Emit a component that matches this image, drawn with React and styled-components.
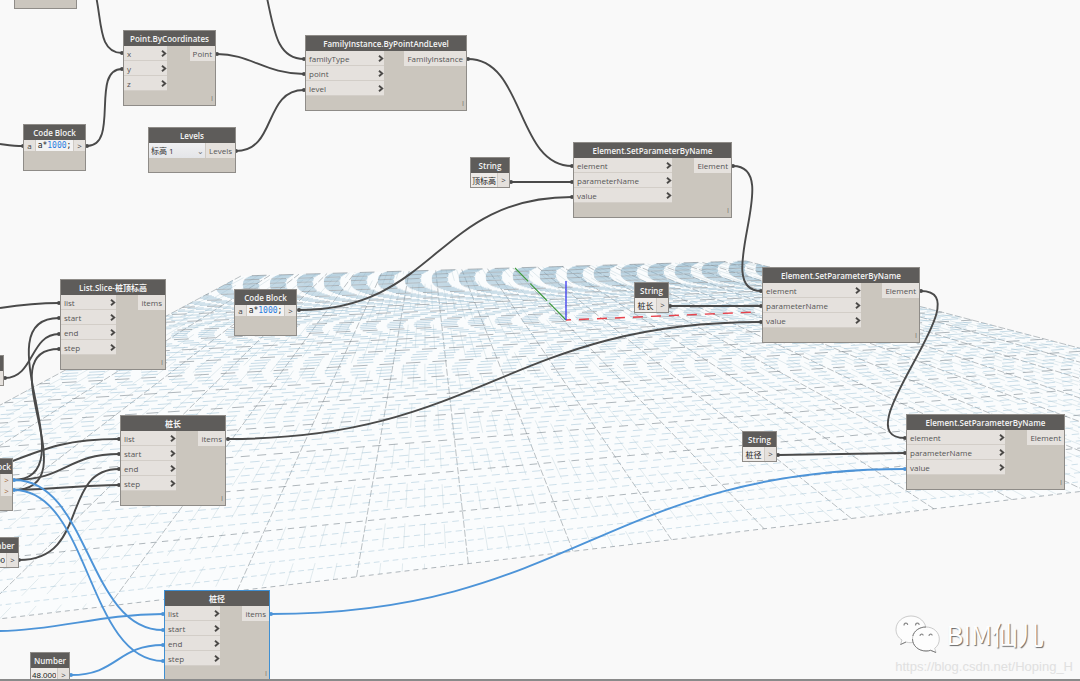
import React from 'react';
import styled, { createGlobalStyle } from 'styled-components';

const GlobalStyle = createGlobalStyle`
    * { box-sizing: border-box; }
    body {
        margin: 0;
        background: #f9f9f9;
        font-family: "Open Sans", "Noto Sans", "Noto Sans CJK SC", sans-serif;
    }
`;

const Workspace = styled.main`
    position: relative;
    min-height: 100vh;
    overflow: hidden;
    border-bottom: 2px solid #8a8a8a;
`;
const Layer = styled.svg`
    position: absolute;
    inset: 0;
    width: 100%;
    height: 100%;
`;

// nodes
const NodeBox = styled.section`
    position: absolute;
    left: ${(p) => p.$x}px;
    top: ${(p) => p.$y}px;
    width: ${(p) => p.$w}px;
    background: #cbc6be;
    border: 1px solid ${(p) => (p.$selected ? '#3f8fd2' : '#8f8c88')};
    color: #555;
    font-size: 8px;
    line-height: 15px;
`;
const NodeTitle = styled.h2`
    margin: 0;
    height: 15px;
    background: #5e5c5a;
    color: #f4f4f4;
    font-size: 8px;
    line-height: 15px;
    font-weight: 600;
    text-align: center;
    white-space: nowrap;
`;
const Ports = styled.div`
    display: flex;
    align-items: flex-start;
    justify-content: space-between;
`;
const InputList = styled.ul`
    width: ${(p) => p.$w}px;
    margin: 0;
    padding: 0;
    list-style: none;
`;
const InputPort = styled.li`
    display: flex;
    align-items: center;
    justify-content: space-between;
    height: 15px;
    padding: 0 0 0 3px;
    background: #e5e1dd;
    border-bottom: 1px solid #d3cec8;
`;
const OutputPort = styled.span`
    height: 15px;
    padding: 0 3px;
    background: #e5e1dd;
`;
const Lacing = styled.div`
    height: ${(p) => p.$h}px;
    padding-right: 2px;
    color: #77736e;
    font-size: 7px;
    line-height: 16px;
    text-align: right;
`;
const ValueRow = styled.div`
    display: flex;
    height: ${(p) => p.$h}px;
    background: #e5e1dd;
    line-height: ${(p) => p.$h}px;
`;
const ValueInput = styled.input`
    flex: 1;
    min-width: 0;
    padding: 0 1px;
    border: 0;
    border-right: 1px solid #cfcac4;
    background: #eeebe8;
    color: #222;
    font-family: "Liberation Sans", "Noto Sans CJK SC", sans-serif;
    font-size: 8px;
    text-align: ${(p) => p.$align || 'center'};
`;
const OutArrow = styled.span`
    width: 11px;
    color: ${(p) => (p.$warm ? '#a3663c' : '#444')};
    text-align: center;
`;
const CodeText = styled.code`
    flex: 1;
    border: solid #cfcac4;
    border-width: 0 1px;
    background: #f3f2f2;
    color: #222;
    font-family: "DejaVu Sans Mono", "Liberation Mono", monospace;
    font-size: 8px;
    line-height: 12px;
    text-align: center;

    b { color: #2b7ee0; font-weight: normal; }
`;
const LevelSelect = styled.select`
    flex: 1;
    min-width: 0;
    padding: 0 2px;
    appearance: none;
    border: 0;
    border-right: 1px solid #cfcac4;
    background: linear-gradient(#f0f0f2, #e4e5e8);
    color: #333;
    font: inherit;
`;
const SelectCaret = styled.span`
    position: absolute;
    right: 31px;
    color: #777;
    pointer-events: none;
`;
const Filler = styled.div`
    height: ${(p) => p.$h}px;
`;

// watermark
const Watermark = styled.footer`
    position: absolute;
    right: 7px;
    bottom: 3px;
    display: flex;
    flex-direction: column;
    align-items: flex-end;
    opacity: 0.99;
`;
const Brand = styled.div`
    display: flex;
    align-items: center;
    gap: 6px;
    margin-right: 29px;
    color: #fff;
    font-family: "Noto Sans CJK SC", sans-serif;
    font-size: 26px;
    line-height: 38px;
    text-shadow: 1px 1px 1px #666;
`;
const BlogLink = styled.a`
    margin-top: 5px;
    color: #e0e0e0;
    font-family: "Liberation Sans", Arial, sans-serif;
    font-size: 13px;
    line-height: 18px;
    text-decoration: none;
`;

// ---- ground grid: 20 x 20 major cells, 5 minor cells in each ----
const CELLS = 100;
const corners = { bl: [-511, 679], br: [1458, 447], tr: [746, 261], tl: [241, 276] };

const makeProjection = ({ bl, br, tr, tl }) => {
    const sx = bl[0] - br[0] + tr[0] - tl[0];
    const sy = bl[1] - br[1] + tr[1] - tl[1];
    const dx1 = br[0] - tr[0];
    const dy1 = br[1] - tr[1];
    const dx2 = tl[0] - tr[0];
    const dy2 = tl[1] - tr[1];
    const det = dx1 * dy2 - dy1 * dx2;
    const g = (sx * dy2 - sy * dx2) / det;
    const h = (dx1 * sy - dy1 * sx) / det;
    return (i, j) => {
        const u = i / CELLS;
        const v = j / CELLS;
        const w = g * u + h * v + 1;
        return [0, 1].map((n) =>
            ((br[n] - bl[n] + g * br[n]) * u + (tl[n] - bl[n] + h * tl[n]) * v + bl[n]) / w);
    };
};
const project = makeProjection(corners);
const indexes = [...Array(CELLS + 1).keys()];
const lineBetween = (a, b) => `M${a[0].toFixed(2)} ${a[1].toFixed(2)}L${b[0].toFixed(2)} ${b[1].toFixed(2)}`;

const Ground = () => (
    <Layer aria-hidden="true" fill="none">
        <polygon
            points={[corners.bl, corners.br, corners.tr, corners.tl].join(' ')}
            fill="#fafcfd"
        />
        {indexes.map((i) => {
            const major = i % 5 === 0;
            return (
                <path
                    key={'c' + i}
                    d={lineBetween(project(i, 0), project(i, CELLS))}
                    stroke={major ? '#7d878d' : '#a3bcc8'}
                    strokeOpacity={major ? 0.65 : 0.42}
                    strokeWidth={major ? 0.8 : 0.7}
                    strokeDasharray={major ? '7 2' : '24 16'}
                    strokeDashoffset={major ? 0 : i * 3}
                />
            );
        })}
        {indexes.map((j) => {
            const major = j % 5 === 0;
            const from = project(0, j);
            const period = 9 + 18 * Math.min(1, j / 36);
            const bend = Math.abs(89 - j);
            const shift = (period * bend * bend * bend) / (3 * 37 * 37);
            const far = Math.min(1, j / 70);
            return (
                <path
                    key={'r' + j}
                    d={lineBetween(from, project(CELLS, j))}
                    stroke={major ? '#75828a' : '#8ab4cc'}
                    strokeOpacity={major ? 0.72 : 0.48 + 0.16 * far}
                    strokeWidth={0.8}
                    strokeDasharray={major
                        ? `${period * 0.55} ${period * 0.45}`
                        : `${period * 0.6} ${period * 0.4}`}
                    strokeDashoffset={from[0] - shift}
                />
            );
        })}
        <path d="M566 320L515 268" stroke="#3f9a3f" strokeDasharray="24 3" strokeWidth="1.2" />
        <path d="M566 320L756 312" stroke="#e8434d" strokeDasharray="10 8" strokeDashoffset="5" strokeWidth="1.4" />
        <path d="M566 320V281" stroke="#4545ee" strokeWidth="1.4" />
    </Layer>
);

const wires = [
    { d: 'M96 -4C102 24 99 53 122 53', to: [122, 53] },
    { d: 'M87 146C120 146 90 69 122 69', from: [87, 146], to: [122, 69] },
    { d: 'M0 144C8 145 14 146 23 146', to: [23, 146] },
    { d: 'M267 -2C274 30 277 59 304 59', to: [304, 59] },
    { d: 'M217 54C250 54 266 74 304 74', from: [217, 54], to: [304, 74] },
    { d: 'M236 151C277 151 263 90 304 90', from: [236, 151], to: [304, 90] },
    { d: 'M468 59C525 59 516 166 572 166', from: [468, 59], to: [572, 166] },
    { d: 'M511 182L572 182', from: [511, 182], to: [572, 182] },
    { d: 'M299 310C436 310 436 197 572 197', from: [299, 310], to: [572, 197] },
    { d: 'M733 166C785 166 710 291 761 291', from: [733, 166], to: [761, 291] },
    { d: 'M670 306H761', from: [670, 306], to: [761, 306] },
    { d: 'M228 439C480 439 510 322 761 322', from: [228, 439], to: [761, 322] },
    { d: 'M921 291C985 291 840 438 905 438', from: [921, 291], to: [905, 438] },
    { d: 'M778 455L905 453', from: [778, 455], to: [905, 453] },
    { d: 'M0 308C20 305 34 303 59 303', to: [59, 303] },
    { d: 'M13 480C90 480 -20 318 59 318', to: [59, 318] },
    { d: 'M5 378C34 378 30 334 59 334', from: [5, 378], to: [59, 334] },
    { d: 'M13 490C92 490 -14 349 59 349', to: [59, 349] },
    { d: 'M0 466C50 446 70 439 119 439', to: [119, 439] },
    { d: 'M13 480C66 480 67 454 119 454', to: [119, 454] },
    { d: 'M19 560C90 560 60 469 119 469', from: [19, 560], to: [119, 469] },
    { d: 'M13 490C50 490 80 485 119 485', to: [119, 485] },
    { d: 'M271 614C570 614 607 469 905 469', from: [271, 614], to: [905, 469], active: true },
    { d: 'M14 480C90 480 87 630 163 630', from: [14, 480], to: [163, 630], active: true },
    { d: 'M14 490C90 490 87 661 163 661', from: [14, 490], to: [163, 661], active: true },
    { d: 'M0 631C60 630 100 614 163 614', to: [163, 614], active: true },
    { d: 'M71 675C118 675 117 645 163 645', from: [71, 675], to: [163, 645], active: true },
];

const Wires = () => (
    <Layer aria-hidden="true" fill="none">
        {wires.map(({ d, from, to, active }) => {
            const color = active ? '#4d94d8' : '#4a4a4a';
            return (
                <g key={d}>
                    <path d={d} stroke={color} strokeWidth="1.9" />
                    {from && <circle cx={from[0]} cy={from[1]} r="2" fill={color} />}
                    <circle cx={to[0]} cy={to[1]} r="2" fill={color} />
                </g>
            );
        })}
    </Layer>
);

const Chevron = () => (
    <svg width="6" height="7" viewBox="0 0 6 7" aria-hidden="true">
        <path d="M1 0.8L4.2 3.5L1 6.2" fill="none" stroke="#4c4a48" strokeWidth="1.9" />
    </svg>
);

const FunctionNode = ({ title, x, y, w, inW, inputs, output, selected }) => (
    <NodeBox $x={x} $y={y} $w={w} $selected={selected}>
        <NodeTitle>{title}</NodeTitle>
        <Ports>
            <InputList $w={inW}>
                {inputs.map((name) => (
                    <InputPort key={name}>{name}<Chevron /></InputPort>
                ))}
            </InputList>
            <OutputPort>{output}</OutputPort>
        </Ports>
        <Lacing $h={14}>I</Lacing>
    </NodeBox>
);

const ValueNode = ({ title, x, y, w, value, align }) => (
    <NodeBox $x={x} $y={y} $w={w}>
        <NodeTitle>{title}</NodeTitle>
        <ValueRow $h={14}>
            <ValueInput aria-label={title} defaultValue={value} $align={align} />
            <OutArrow>&gt;</OutArrow>
        </ValueRow>
    </NodeBox>
);

const CodeNode = ({ x, y }) => (
    <NodeBox $x={x} $y={y} $w={63}>
        <NodeTitle>Code Block</NodeTitle>
        <ValueRow $h={11}>
            <OutArrow>a</OutArrow>
            <CodeText>a*<b>1000</b>;</CodeText>
            <OutArrow>&gt;</OutArrow>
        </ValueRow>
        <Filler $h={19} />
    </NodeBox>
);

const setInputs = ['element', 'parameterName', 'value'];
const listInputs = ['list', 'start', 'end', 'step'];

const functionNodes = [
    { title: 'Point.ByCoordinates', x: 123, y: 30, w: 93, inW: 43, inputs: ['x', 'y', 'z'], output: 'Point' },
    { title: 'FamilyInstance.ByPointAndLevel', x: 305, y: 35, w: 162, inW: 78, inputs: ['familyType', 'point', 'level'], output: 'FamilyInstance' },
    { title: 'Element.SetParameterByName', x: 573, y: 142, w: 159, inW: 98, inputs: setInputs, output: 'Element' },
    { title: 'Element.SetParameterByName', x: 762, y: 267, w: 158, inW: 98, inputs: setInputs, output: 'Element' },
    { title: 'Element.SetParameterByName', x: 906, y: 414, w: 159, inW: 98, inputs: setInputs, output: 'Element' },
    { title: 'List.Slice-桩顶标高', x: 60, y: 279, w: 106, inW: 55, inputs: listInputs, output: 'items' },
    { title: '桩长', x: 120, y: 415, w: 106, inW: 55, inputs: listInputs, output: 'items' },
    { title: '桩径', x: 164, y: 590, w: 106, inW: 55, inputs: listInputs, output: 'items', selected: true },
];
const valueNodes = [
    { title: 'String', x: 470, y: 157, w: 40, value: '顶标高' },
    { title: 'String', x: 634, y: 282, w: 35, value: '桩长' },
    { title: 'String', x: 742, y: 431, w: 35, value: '桩径' },
    { title: 'Number', x: 30, y: 652, w: 40, value: '48.000' },
    { title: 'Number', x: -22, y: 537, w: 41, value: '0.000', align: 'right' },
];

const WeChatIcon = () => (
    <svg width="45" height="38" viewBox="0 0 45 38" aria-hidden="true">
        <g fill="#fefefe" stroke="#b5b5b5" strokeWidth="0.7">
            <path d="M16 1C7.700 1 1 7 1 14.500C1 19 3.400 22.800 7 25L5.500 29.500L11 27C12.600 27.500 14.300 27.700 16 27.700C24.300 27.700 31 22 31 14.500C31 7 24.300 1 16 1Z" />
            <path d="M31 12C23.500 12 17.500 17.300 17.500 24C17.500 30.700 23.500 36 31 36C32.700 36 34.200 35.800 35.600 35.300L41 37.500L39.700 33.300C42.700 31.200 44.300 27.800 44.300 24C44.300 17.300 38.500 12 31 12Z" />
        </g>
        <path d="M17.500 24C17.500 30.700 23.500 36 31 36C32.700 36 34.200 35.800 35.600 35.300L41 37.500M17.800 21C19 16 24 12 31 12M5.500 29.500L11 27" fill="none" stroke="#7d7d7d" strokeWidth="1" />
        <g fill="none" stroke="#8b8b8b" strokeWidth="1.200">
            <path d="M9 10.500C9 7.500 12.500 7.500 12.700 10" />
            <path d="M20.500 10.500C20.500 7.500 24 7.500 24.200 10" />
            <path d="M25 21C25 18.500 28 18.500 28.200 20.500" />
            <path d="M34 21C34 18.500 37 18.500 37.200 20.500" />
        </g>
    </svg>
);

const App = () => (
    <>
        <GlobalStyle />
        <Workspace>
            <Ground />
            <Wires />

            <NodeBox $x={14} $y={-22} $w={63}>
                <Filler $h={29} />
            </NodeBox>
            <NodeBox $x={-36} $y={355} $w={40}>
                <NodeTitle />
                <ValueRow $h={14} />
            </NodeBox>
            <NodeBox $x={-34} $y={458} $w={47}>
                <NodeTitle>Code Block</NodeTitle>
                <ValueRow $h={11}>
                    <CodeText />
                    <OutArrow $warm>&gt;</OutArrow>
                </ValueRow>
                <ValueRow $h={11}>
                    <CodeText />
                    <OutArrow $warm>&gt;</OutArrow>
                </ValueRow>
                <Filler $h={14} />
            </NodeBox>

            {functionNodes.map((node) => (
                <FunctionNode key={node.x} {...node} />
            ))}
            {valueNodes.map((node) => (
                <ValueNode key={node.x} {...node} />
            ))}
            <CodeNode x={23} y={124} />
            <CodeNode x={234} y={289} />

            <NodeBox $x={148} $y={127} $w={88}>
                <NodeTitle>Levels</NodeTitle>
                <ValueRow $h={15}>
                    <LevelSelect aria-label="Levels">
                        <option>标高 1</option>
                    </LevelSelect>
                    <SelectCaret>⌄</SelectCaret>
                    <OutputPort>Levels</OutputPort>
                </ValueRow>
                <Filler $h={14} />
            </NodeBox>

            <Watermark>
                <Brand><WeChatIcon />BIM仙儿</Brand>
                <BlogLink href="https://blog.csdn.net/Hoping_H">https://blog.csdn.net/Hoping_H</BlogLink>
            </Watermark>
        </Workspace>
    </>
);

export default App;
